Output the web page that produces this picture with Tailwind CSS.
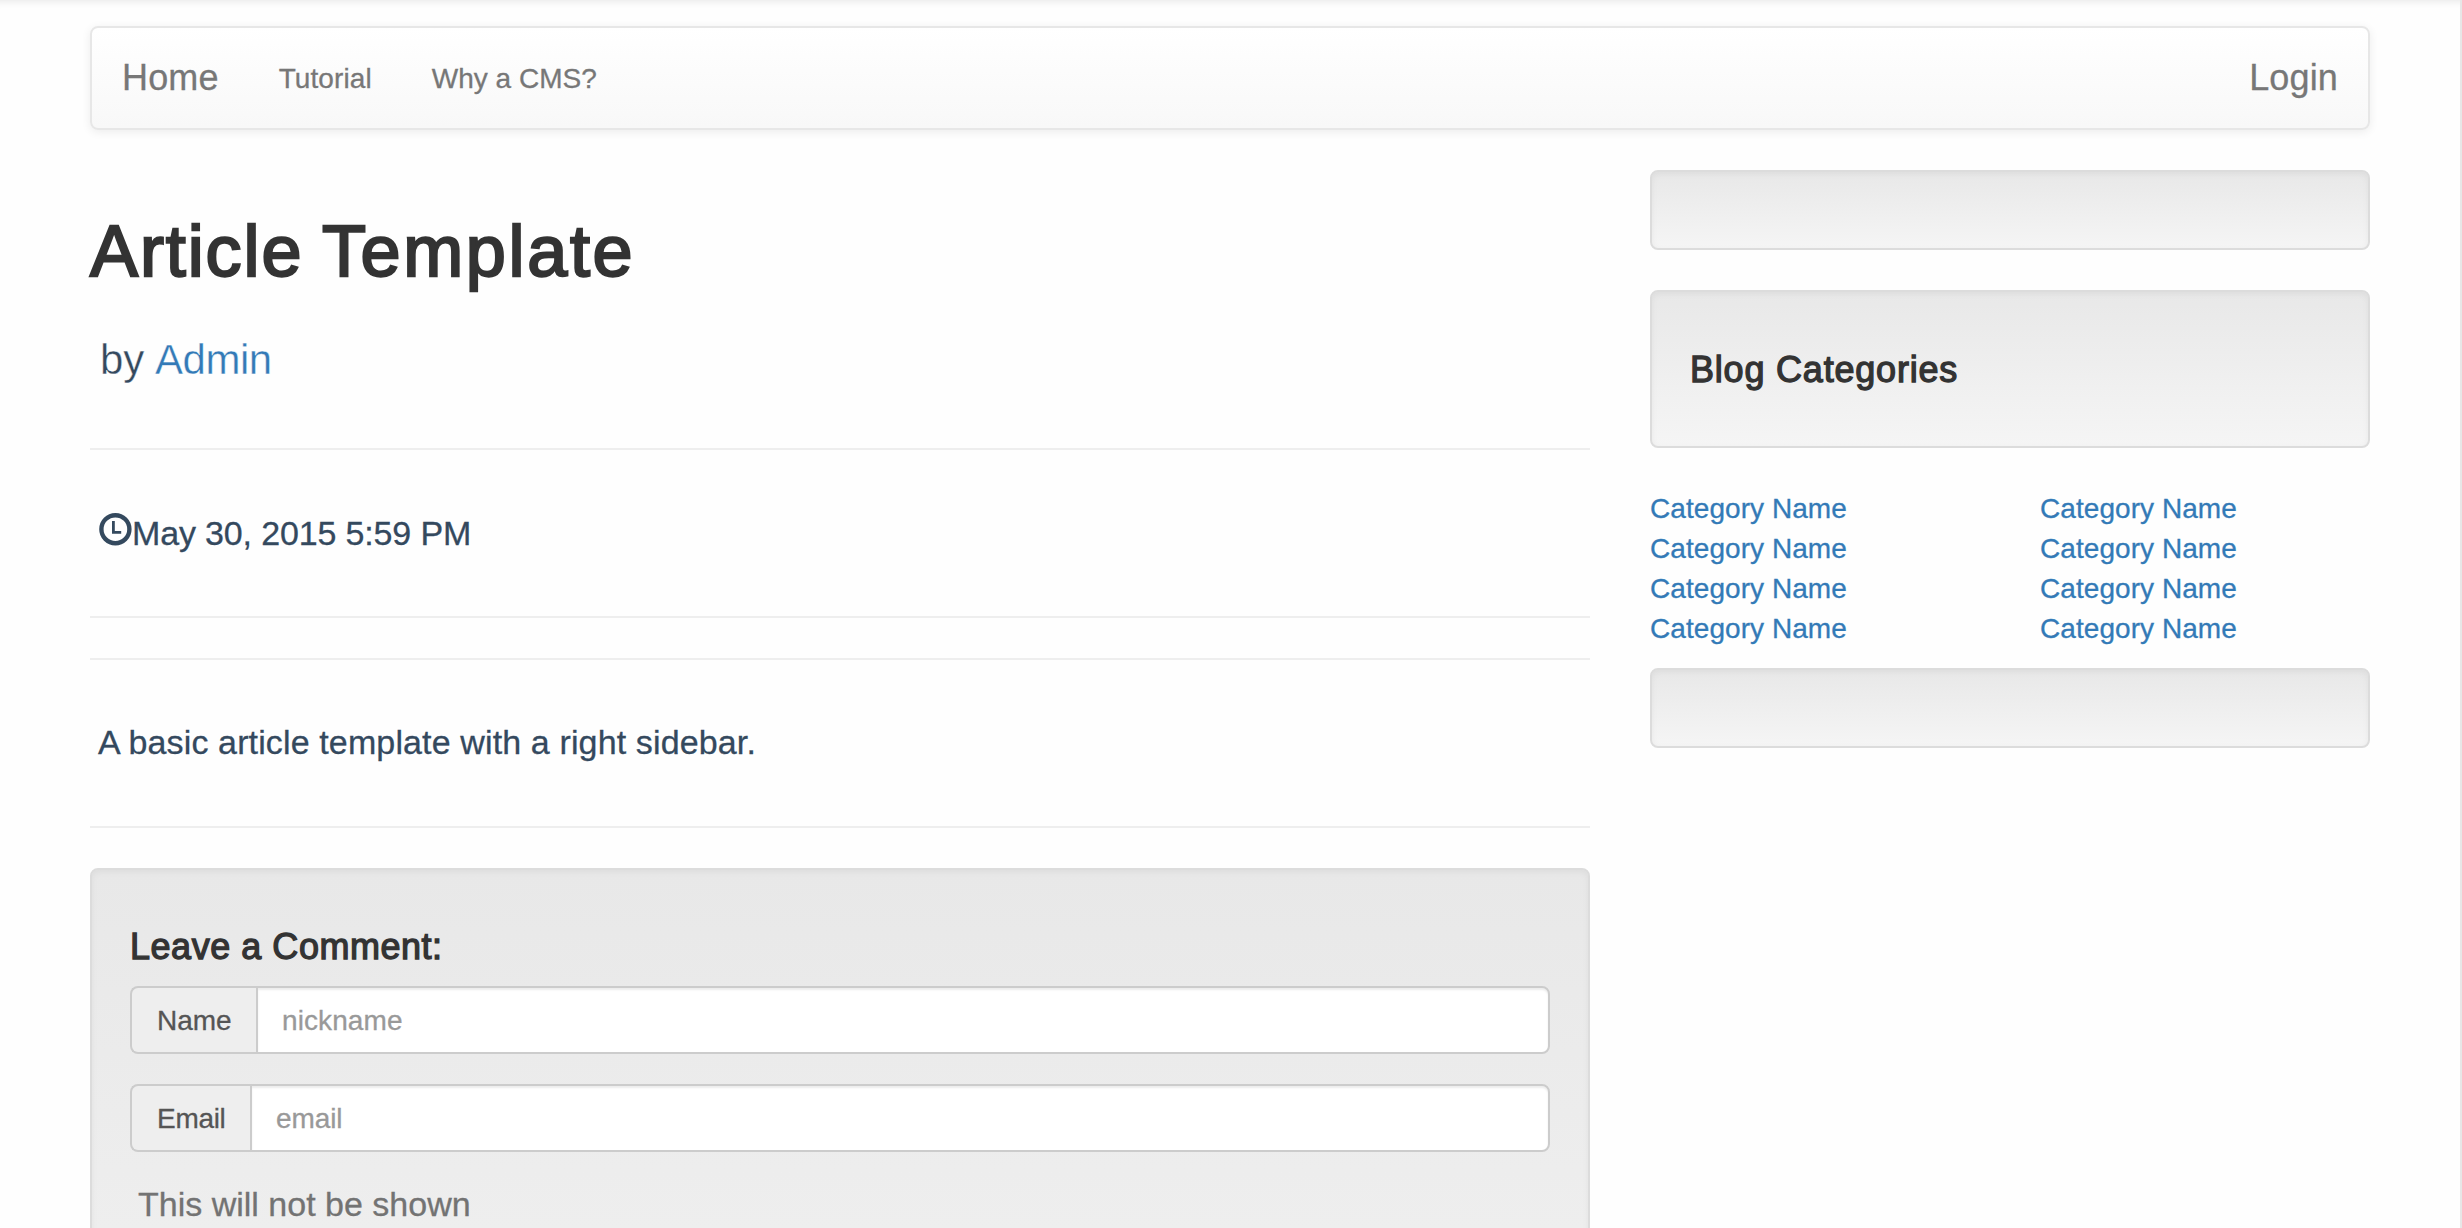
<!DOCTYPE html>
<html lang="en">
<head>
<meta charset="utf-8">
<title>Article Template</title>
<script src="https://cdn.jsdelivr.net/npm/@tailwindcss/browser@4"></script>
</head>
<body class="h-[1228px] overflow-hidden bg-[#fefefe] font-['Liberation_Sans',Arial,sans-serif] text-[28px] leading-[40px] text-[#333] [-webkit-text-stroke:0.3px]">
<div class="h-full overflow-hidden border-r-2 border-[#e7e7e7] pl-[90px] pr-[90px] pt-[26px] shadow-[inset_0_10px_10px_-10px_rgba(0,0,0,0.12)]">
  <nav class="flex h-[104px] items-center rounded-[8px] border-2 border-[#e7e7e7] bg-linear-to-b from-white to-[#f8f8f8] pl-[30px] pr-[30px] text-[#777] shadow-[0_2px_10px_rgba(0,0,0,0.075)]">
    <a class="text-[36px] tracking-[0.15px]">Home</a>
    <a class="ml-[60px] pt-[2px] tracking-[0.1px]">Tutorial</a>
    <a class="ml-[60px] pt-[2px]">Why a CMS?</a>
    <a class="ml-auto text-[36px] tracking-[0.15px]">Login</a>
  </nav>
  <div class="flex pt-[40px]">
    <main class="w-[1500px]">
      <h1 class="pt-[42px] text-[72px] leading-[79px] tracking-[2.65px] [word-spacing:-2.8px] [-webkit-text-stroke:2.3px_#333]"><span class="tracking-[1.9px]">Article</span> Template</h1>
      <p class="mt-[39px] pl-[10px] text-[42px] leading-[60px] text-[#34495e] [-webkit-text-stroke:0.4px_#fefefe]">by <a class="-ml-px tracking-[-0.5px] text-[#337ab7]">Admin</a></p>
      <hr class="mt-[58px] border-t-2 border-[#eee]">
      <p class="mt-[59px] flex pl-[8px] text-[34px] leading-[48px] text-[#34495e]">
        <svg class="mt-[3px] size-[34px]" viewBox="0 0 34 34" fill="none" stroke="#34495e"><circle cx="17.4" cy="17.2" r="14" stroke-width="4.4"/><path d="M15.4 9v12.6M14 20.4h9.2" stroke-width="2.8"/></svg>
        <span class="tracking-[-0.15px]">May 30, 2015 5:59 PM</span></p>
      <hr class="mt-[59px] border-t-2 border-[#eee]">
      <hr class="mt-[40px] border-t-2 border-[#eee]">
      <p class="mt-[58px] pl-[8px] text-[34px] leading-[48px] tracking-[0.13px] text-[#34495e]">A basic article template with a right sidebar.</p>
      <hr class="mt-[60px] border-t-2 border-[#eee]">
      <section class="mt-[40px] h-[780px] rounded-[8px] border-2 border-[#dcdcdc] bg-linear-to-b from-[#e8e8e8] to-[#f5f5f5] px-[38px] pt-[38px] shadow-[inset_0_2px_6px_rgba(0,0,0,0.05)]">
        <h4 class="mt-[19px] text-[36px] leading-[40px] tracking-[0.53px] [-webkit-text-stroke:1.3px_#333]">Leave a Comment:</h4>
        <div class="mt-[19px] flex h-[68px]">
          <label class="flex w-[126px] items-center rounded-l-[8px] border-2 border-r-0 border-[#ccc] bg-[#eee] pl-[25px] pt-[2px] text-[#555]">Name</label>
          <div class="flex flex-1 items-center rounded-r-[8px] border-2 border-[#ccc] bg-white pl-[24px] pt-[2px] tracking-[0.1px] text-[#999] shadow-[inset_0_2px_2px_rgba(0,0,0,0.075)]">nickname</div>
        </div>
        <div class="mt-[30px] flex h-[68px]">
          <label class="flex w-[120px] items-center rounded-l-[8px] border-2 border-r-0 border-[#ccc] bg-[#eee] pl-[25px] pt-[2px] tracking-[-0.3px] text-[#555]">Email</label>
          <div class="flex flex-1 items-center rounded-r-[8px] border-2 border-[#ccc] bg-white pl-[24px] pt-[2px] tracking-[-0.1px] text-[#999] shadow-[inset_0_2px_2px_rgba(0,0,0,0.075)]">email</div>
        </div>
        <p class="mt-[28px] pl-[8px] text-[34px] leading-[48px] text-[#737373]">This will not be shown</p>
      </section>
    </main>
    <aside class="ml-[60px] w-[720px]">
      <div class="h-[80px] rounded-[8px] border-2 border-[#dcdcdc] bg-linear-to-b from-[#e8e8e8] to-[#f5f5f5] shadow-[inset_0_2px_6px_rgba(0,0,0,0.05)]"></div>
      <div class="mt-[40px] h-[158px] rounded-[8px] border-2 border-[#dcdcdc] bg-linear-to-b from-[#e8e8e8] to-[#f5f5f5] px-[38px] pt-[58px] shadow-[inset_0_2px_6px_rgba(0,0,0,0.05)]">
        <h4 class="text-[36px] leading-[40px] tracking-[0.8px] [-webkit-text-stroke:1.3px_#333]">Blog Categories</h4>
      </div>
      <div class="mt-[41px] grid grid-cols-[390px_1fr] tracking-[0.06px] text-[#337ab7]">
        <a>Category Name</a><a>Category Name</a>
        <a>Category Name</a><a>Category Name</a>
        <a>Category Name</a><a>Category Name</a>
        <a>Category Name</a><a>Category Name</a>
      </div>
      <div class="mt-[19px] h-[80px] rounded-[8px] border-2 border-[#dcdcdc] bg-linear-to-b from-[#e8e8e8] to-[#f5f5f5] shadow-[inset_0_2px_6px_rgba(0,0,0,0.05)]"></div>
    </aside>
  </div>
</div>
</body>
</html>
